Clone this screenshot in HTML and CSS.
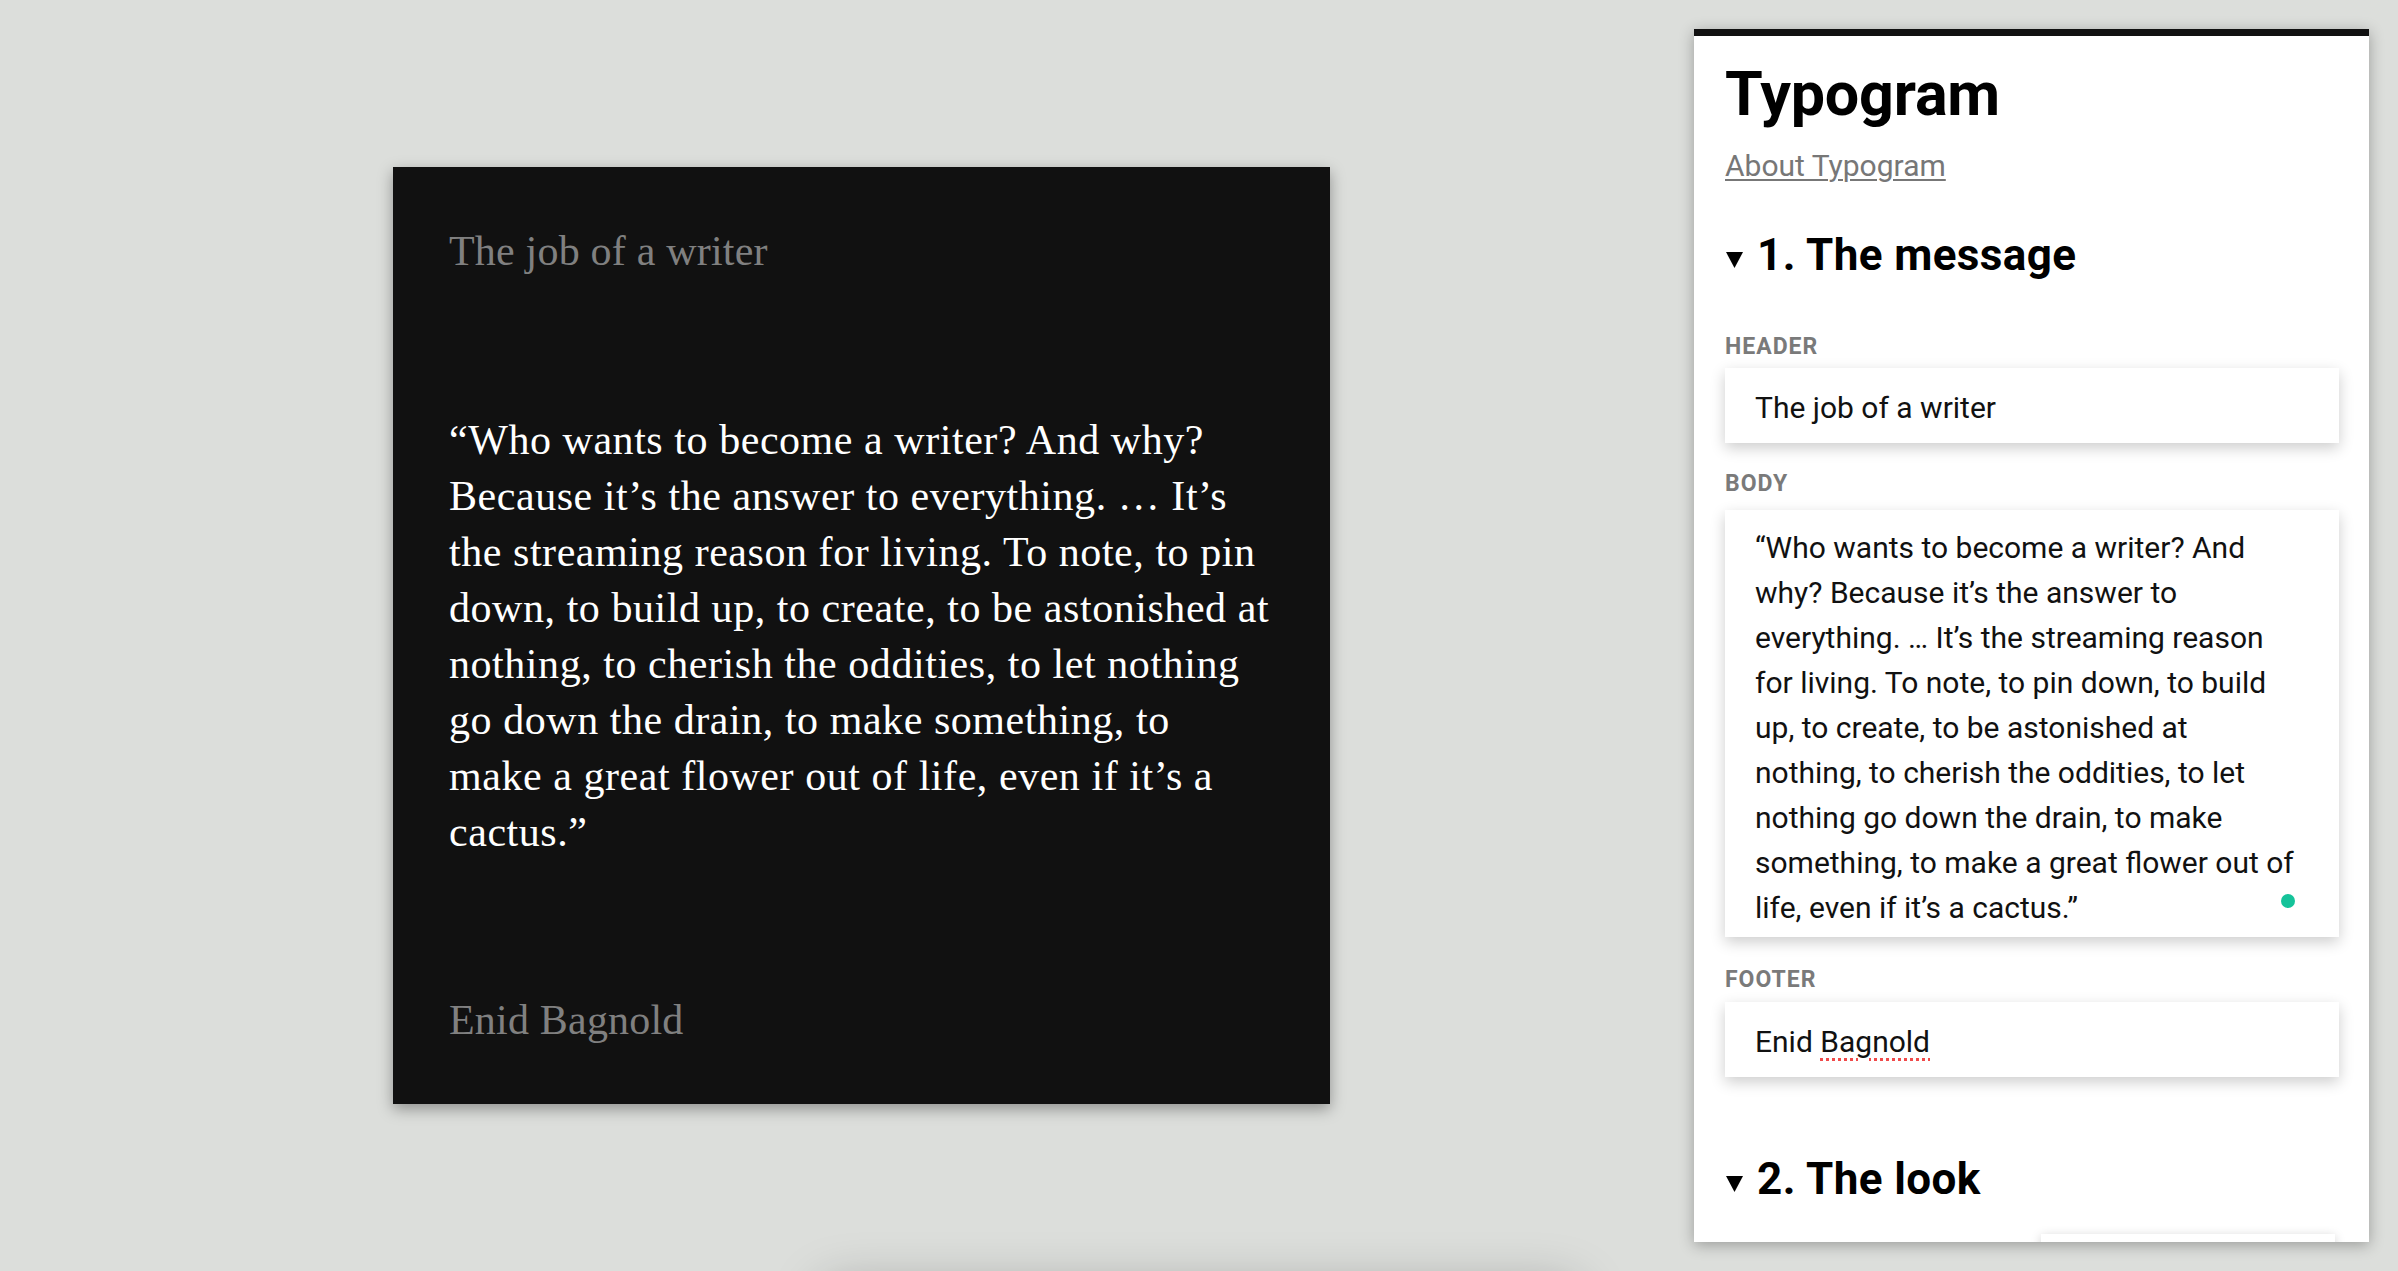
FILE: index.html
```html
<!DOCTYPE html>
<html lang="en">
<head>
<meta charset="utf-8">
<title>Typogram</title>
<link rel="stylesheet" href="styles.css">
</head>
<body>
<div class="app">
<main class="stage">
  <article class="poster">
    <p class="poster-header">The job of a writer</p>
    <p class="poster-body">“Who wants to become a writer? And why?<br>Because it’s the answer to everything. … It’s<br>the streaming reason for living. To note, to pin<br>down, to build up, to create, to be astonished at<br>nothing, to cherish the oddities, to let nothing<br>go down the drain, to make something, to<br>make a great flower out of life, even if it’s a<br>cactus.”</p>
    <p class="poster-footer">Enid Bagnold</p>
  </article>
</main>
<aside class="panel">
  <h1 class="panel-title">Typogram</h1>
  <p class="panel-about"><a href="#">About Typogram</a></p>
  <h2 class="section-title"><svg class="caret" viewBox="0 0 17 16" width="17" height="16"><polygon points="0,0 17,0 8.5,16" fill="#000"/></svg>1. The message</h2>
  <div class="field-label">Header</div>
  <div class="field">The job of a writer</div>
  <div class="field-label field-label--body">Body</div>
  <div class="field field--area">“Who wants to become a writer? And<br>why? Because it’s the answer to<br>everything. … It’s the streaming reason<br>for living. To note, to pin down, to build<br>up, to create, to be astonished at<br>nothing, to cherish the oddities, to let<br>nothing go down the drain, to make<br>something, to make a great flower out of<br>life, even if it’s a cactus.”<span class="status-dot"></span></div>
  <div class="field-label field-label--footer">Footer</div>
  <div class="field field--footer">Enid <span class="misspelt">Bagnold</span></div>
  <h2 class="section-title section-title--second"><svg class="caret" viewBox="0 0 17 16" width="17" height="16"><polygon points="0,0 17,0 8.5,16" fill="#000"/></svg>2. The look</h2>
  <div class="control-peek"></div>
</aside>
<div class="dock"></div>
</div>
</body>
</html>
```

FILE: styles.css
```css
html, body {
  margin: 0;
  padding: 0;
  overflow: hidden;
}

body {
  background: #dcdedb;
  font-family: Roboto, "Noto Sans", Arial, sans-serif;
}

.app {
  position: relative;
  display: flex;
  height: 1271px;
  overflow: hidden;
}

.stage {
  flex: 1;
  display: flex;
  align-items: center;
  justify-content: center;
  padding-left: 29px;
}

.poster {
  box-sizing: border-box;
  width: 937px;
  height: 937px;
  padding: 56px;
  background: #111111;
  display: flex;
  flex-direction: column;
  justify-content: space-between;
  box-shadow: 0 5px 14px rgba(0, 0, 0, 0.35);
  font-family: "Liberation Serif", "Times New Roman", serif;
  font-size: 42px;
  line-height: 56px;
}

.poster p {
  margin: 0;
  white-space: nowrap;
}

.poster-header,
.poster-footer {
  color: #808080;
  letter-spacing: 0.2px;
}

.poster-body {
  color: #ffffff;
  letter-spacing: 0.55px;
}

.panel {
  flex: none;
  box-sizing: border-box;
  width: 675px;
  height: 1213px;
  margin: 29px 29px 29px 0;
  padding: 22px 30px 0 31px;
  border-top: 7px solid #111111;
  background: #ffffff;
  overflow: hidden;
  box-shadow: 0 3px 14px rgba(0, 0, 0, 0.3);
  display: flex;
  flex-direction: column;
}

.panel-title {
  margin: 0;
  font-size: 61px;
  line-height: 72px;
  font-weight: 700;
  color: #000;
  letter-spacing: -0.2px;
}

.panel-about {
  margin: 16px 0 0;
  font-size: 30px;
  line-height: 40px;
}

.panel-about a {
  color: #777777;
  text-decoration: underline;
  text-decoration-thickness: 2px;
  text-underline-offset: 3px;
}

.section-title {
  margin: 43px 0 0;
  font-size: 44px;
  line-height: 52px;
  font-weight: 700;
  color: #000;
  letter-spacing: 0.4px;
  display: flex;
  align-items: baseline;
}

.section-title--second {
  margin-top: 76px;
}

.caret {
  flex: none;
  margin: 0 14px 0 1px;
  transform: translateY(-2px);
}

.field-label {
  margin-top: 51px;
  font-size: 23px;
  line-height: 30px;
  font-weight: 700;
  color: #7a7a7a;
  text-transform: uppercase;
  letter-spacing: 1px;
}

.field-label--body {
  margin-top: 26px;
}

.field-label--footer {
  margin-top: 28px;
}

.field {
  position: relative;
  margin-top: 6px;
  box-sizing: border-box;
  height: 75px;
  padding: 17px 30px 13px;
  background: #ffffff;
  font-size: 30px;
  line-height: 45px;
  color: #111111;
  white-space: nowrap;
  box-shadow: 0 5px 14px rgba(0, 0, 0, 0.2);
}

.field--area {
  margin-top: 11px;
  height: 427px;
  padding: 15px 30px 7px;
}

.field--footer {
  margin-top: 7px;
  height: 76px;
}

.misspelt {
  text-decoration: underline dotted #f04a4a;
  text-decoration-thickness: 3px;
  text-underline-offset: 6px;
}

.status-dot {
  position: absolute;
  right: 44px;
  bottom: 29px;
  width: 14px;
  height: 14px;
  border-radius: 50%;
  background: #15c39a;
}

.control-peek {
  flex: none;
  margin: 29px 4px 0 auto;
  width: 294px;
  height: 60px;
  background: #ffffff;
  box-shadow: 0 2px 10px rgba(0, 0, 0, 0.18);
}

.dock {
  position: absolute;
  left: 820px;
  top: 1290px;
  width: 760px;
  height: 100px;
  border-radius: 20px;
  background: #dcdedb;
  box-shadow: 0 -6px 50px rgba(0, 0, 0, 0.25);
}
```
